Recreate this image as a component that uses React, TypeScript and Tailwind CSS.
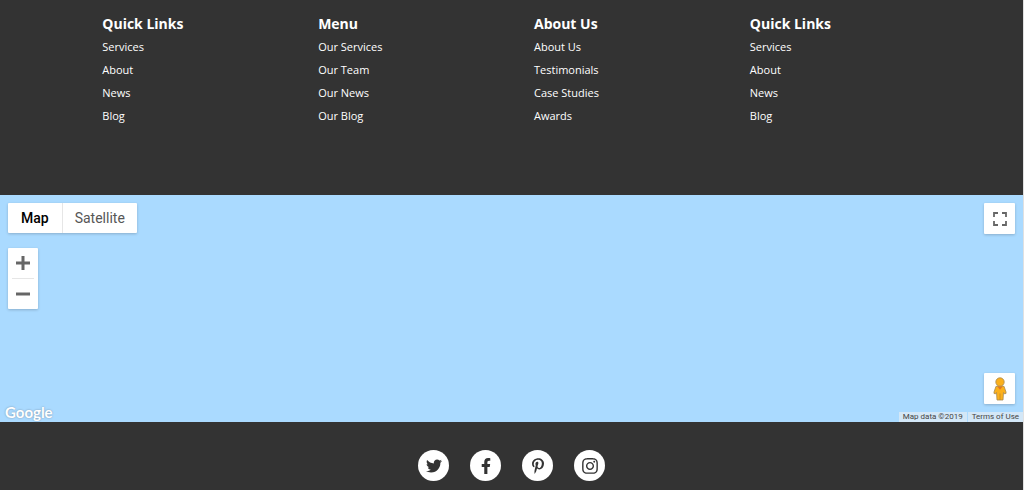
import type { ReactNode } from 'react';
import { FaFacebookF, FaInstagram, FaPinterestP, FaTwitter } from 'react-icons/fa';

const COLUMNS = [
  { title: 'Quick Links', links: ['Services', 'About', 'News', 'Blog'] },
  { title: 'Menu', links: ['Our Services', 'Our Team', 'Our News', 'Our Blog'] },
  { title: 'About Us', links: ['About Us', 'Testimonials', 'Case Studies', 'Awards'] },
  { title: 'Quick Links', links: ['Services', 'About', 'News', 'Blog'] },
];

const SOCIALS = [
  { label: 'Twitter', icon: <FaTwitter size={16} /> },
  { label: 'Facebook', icon: <FaFacebookF size={16} /> },
  { label: 'Pinterest', icon: <FaPinterestP size={16} /> },
  { label: 'Instagram', icon: <FaInstagram size={18} /> },
];

function SquareButton({ label, children }: { label: string; children: ReactNode }) {
  return (
    <button
      aria-label={label}
      className="flex size-[31px] items-center justify-center rounded-[1px] bg-white text-[#666] shadow-[0_1px_3px_rgba(0,0,0,0.2)]"
    >
      {children}
    </button>
  );
}

function Pegman() {
  return (
    <svg width="14" height="24" viewBox="0 0 14 24">
      <path
        d="M3 9.300h8l2 5.700v1.500l-1.800.3-.7-1.300-.5 7.500H4l-.5-7.500-.7 1.300-1.800-.3V15z"
        fill="#fbb01c"
        stroke="#a8894f"
        strokeWidth=".8"
        strokeLinejoin="round"
      />
      <path d="M7 16.500v6.500" stroke="#c78a20" strokeWidth=".8" />
      <path d="M4.300 9.400h5.400L7 12.700z" fill="#e5751f" />
      <circle cx="7" cy="5" r="4.200" fill="#fbb01c" stroke="#a8894f" strokeWidth=".8" />
    </svg>
  );
}

function MapPanel() {
  return (
    <section
      aria-label="Map"
      className="flex h-[227px] justify-between bg-[#aadaff] font-['Roboto',sans-serif]"
    >
      <div className="flex flex-col items-start pt-2">
        <div className="ml-2 flex h-[30px] rounded-[1px] bg-white text-sm shadow-[0_1px_3px_rgba(0,0,0,0.2)]">
          <button className="border-r border-[#e6e6e6] px-[13px] font-medium text-black">Map</button>
          <button className="px-3 text-[#565656]">Satellite</button>
        </div>

        <div className="mt-[15px] ml-2 flex w-[30px] flex-col rounded-[1px] bg-white px-1 text-[#666] shadow-[0_1px_3px_rgba(0,0,0,0.2)]">
          <button aria-label="Zoom in" className="flex h-[31px] items-center justify-center border-b border-[#e6e6e6]">
            <svg width="14" height="14" viewBox="0 0 14 14" fill="currentColor">
              <path d="M5.500 0h3v5.500H14v3H8.500V14h-3V8.500H0v-3h5.500z" />
            </svg>
          </button>
          <button aria-label="Zoom out" className="flex h-[30px] items-center justify-center">
            <svg width="14" height="14" viewBox="0 0 14 14" fill="currentColor">
              <path d="M0 5.500h14v3H0z" />
            </svg>
          </button>
        </div>

        <a
          href="#google"
          className="mt-auto ml-[5px] font-['Lato',sans-serif] text-[15px] leading-5 font-bold text-white [text-shadow:0_0_2px_#7590a8]"
        >
          Google
        </a>
      </div>

      <div className="flex flex-col items-end pt-2">
        <div className="mr-2">
          <SquareButton label="Toggle fullscreen view">
            <svg width="14" height="14" viewBox="0 0 14 14" fill="none" stroke="currentColor" strokeWidth="1.8">
              <path d="M1 5V1h4M9 1h4v4M13 9v4H9M5 13H1V9" />
            </svg>
          </SquareButton>
        </div>
        <div className="mt-auto mr-2 mb-2">
          <SquareButton label="Street View">
            <Pegman />
          </SquareButton>
        </div>
        <div className="flex gap-px text-[8px] leading-[10px] text-[#444]">
          <span className="bg-[#d3e7f7] px-1">Map data ©2019</span>
          <a href="#terms" className="bg-[#d3e7f7] px-1">Terms of Use</a>
        </div>
      </div>
    </section>
  );
}

export default function App() {
  return (
    <div className="min-h-screen border-r border-[#e0e0e0] bg-[#333] font-['Open_Sans',sans-serif] text-white">
      <nav className="mx-auto grid w-4/5 grid-cols-4 gap-x-[45px] pt-[13px] pb-[68px]">
        {COLUMNS.map((col, i) => (
          <div key={i}>
            <h4 className="text-sm leading-[22px] font-bold">{col.title}</h4>
            <ul className="text-[11px] leading-[23px]">
              {col.links.map(link => (
                <li key={link}>
                  <a href="#link">{link}</a>
                </li>
              ))}
            </ul>
          </div>
        ))}
      </nav>

      <MapPanel />

      <ul className="flex justify-center gap-[21px] pt-7">
        {SOCIALS.map(({ label, icon }) => (
          <li key={label}>
            <a
              href="#social"
              aria-label={label}
              className="flex size-[31px] items-center justify-center rounded-full bg-white text-[#333]"
            >
              {icon}
            </a>
          </li>
        ))}
      </ul>
    </div>
  );
}
